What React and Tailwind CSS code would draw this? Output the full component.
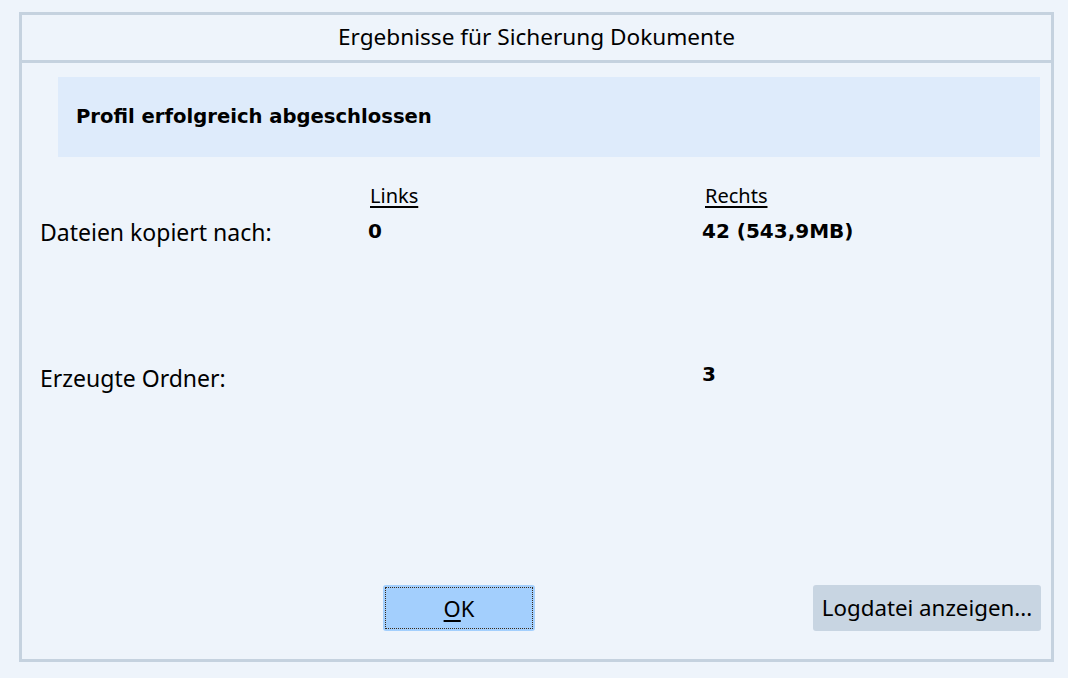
import React from "react";

const sans = { fontFamily: '"Noto Sans", "Open Sans", sans-serif' };

const App = () => {
	return (
		<div
			className="w-[1068px] h-[678px] bg-[#eef4fb] pt-[12px] pl-[19px] text-black"
			style={sans}
		>
			<div className="w-[1035px] h-[650px] border-[3px] border-[#c5d2df] flex flex-col">
				{/* Title */}
				<div className="h-[48px] border-b-[3px] border-[#c5d2df] flex items-center justify-center text-[22.6px] leading-none pb-[1px]">
					Ergebnisse für Sicherung Dokumente
				</div>

				{/* Status */}
				<div className="mt-[14px] ml-[36px] mr-[11px] h-[80px] bg-[#deebfb] flex items-center pl-[18px]">
					<span className="font-['DejaVu_Sans',sans-serif] font-bold text-[19.6px]">
						Profil erfolgreich abgeschlossen
					</span>
				</div>

				{/* Results */}
				<div className="grid grid-cols-[328px_334px_1fr] pl-[18px] mt-[26px]">
					<div />
					<div className="text-[20px] leading-[24px] pt-[1px]">
						<span className="underline underline-offset-[3px] ml-[2px]">Links</span>
					</div>
					<div className="text-[20px] leading-[24px] pt-[1px]">
						<span className="underline underline-offset-[3px] ml-[3px]">Rechts</span>
					</div>

					<div className="text-[23px] leading-[28px] mt-[10px]">
						Dateien kopiert nach:
					</div>
					<div className="font-['DejaVu_Sans',sans-serif] font-bold text-[20px] leading-[24px] mt-[11px]">
						0
					</div>
					<div className="font-['DejaVu_Sans',sans-serif] font-bold text-[20px] leading-[24px] mt-[11px]">
						42 (543,9MB)
					</div>

					<div className="text-[23px] leading-[28px] mt-[118px]">
						Erzeugte Ordner:
					</div>
					<div />
					<div className="font-['DejaVu_Sans',sans-serif] font-bold text-[20px] leading-[24px] mt-[116px]">
						3
					</div>
				</div>

				<div className="flex-1" />

				{/* Buttons */}
				<div className="flex items-center pl-[361px] pr-[10px] mb-[28px]">
					<button className="w-[152px] h-[46px] rounded-[3px] bg-[#a3cffd] p-[2px]">
						<div className="w-full h-full border border-dotted border-[#3a2a1a] flex items-center justify-center text-[22px]">
							<span>
								<span className="underline underline-offset-[3px]">O</span>K
							</span>
						</div>
					</button>
					<button className="ml-auto w-[228px] h-[46px] rounded-[3px] bg-[#c8d5e2] flex items-center justify-center text-[22.3px]">
						Logdatei anzeigen...
					</button>
				</div>
			</div>
		</div>
	);
};

export default App;
